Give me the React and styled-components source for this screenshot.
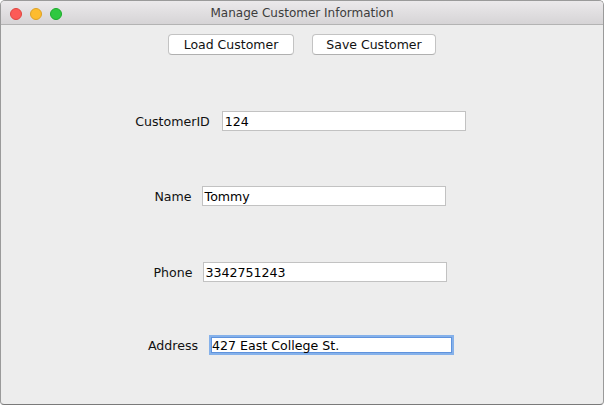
import React from "react";
import styled, { createGlobalStyle } from "styled-components";

const Global = createGlobalStyle`
  html, body { margin: 0; padding: 0; background: #ffffff; }
  * { box-sizing: border-box; }
`;

const Window = styled.div`
  width: 604px;
  height: 405px;
  background: #ededed;
  border: 1px solid #9a9a9a;
  border-bottom-color: #7a7a7a;
  border-radius: 5px 5px 4px 4px;
  overflow: hidden;
  display: flex;
  flex-direction: column;
  font-family: "DejaVu Sans", "Liberation Sans", sans-serif;
`;

const TitleBar = styled.div`
  position: relative;
  height: 24px;
  flex: none;
  background: linear-gradient(#ebe9eb, #d6d4d6);
  border-bottom: 1px solid #b3b3b3;
  display: flex;
  align-items: center;
  justify-content: center;
`;

const Lights = styled.div`
  position: absolute;
  left: 9px;
  top: 7px;
  display: flex;
  gap: 8px;
`;

const Light = styled.span`
  width: 12px;
  height: 12px;
  border-radius: 50%;
  background: ${(p) => p.$fill};
  border: 0.5px solid ${(p) => p.$edge};
`;

const Title = styled.div`
  font-size: 12px;
  color: #3c3c3c;
  margin-top: 1px;
`;

const Content = styled.div`
  flex: 1;
  display: flex;
  flex-direction: column;
  align-items: center;
`;

const ButtonRow = styled.div`
  display: flex;
  gap: 18px;
  margin-top: 9px;
`;

const Button = styled.button`
  width: ${(p) => p.$w}px;
  height: 21px;
  background: #ffffff;
  border: 1px solid #c3c3c3;
  border-bottom-color: #b0b0b0;
  border-radius: 4px;
  font-family: "DejaVu Sans", "Liberation Sans", sans-serif;
  font-size: 12.5px;
  color: #111;
  padding: 0;
  display: flex;
  align-items: center;
  justify-content: center;
`;

const FieldRow = styled.div`
  display: flex;
  align-items: center;
  gap: ${(p) => p.$gap}px;
  margin-top: ${(p) => p.$top}px;
  margin-left: ${(p) => p.$shift || 0}px;
`;

const Label = styled.span`
  font-size: 12.6px;
  color: #111;
`;

const Field = styled.div`
  width: 244px;
  height: 20px;
  background: #ffffff;
  border: 1px solid #c2c2c2;
  font-size: 12.6px;
  color: #000;
  padding-left: 2px;
  display: flex;
  align-items: center;
  ${(p) =>
    p.$focused &&
    `
    border: 2px solid #85b1ea;
    box-shadow: inset 0 0 0 1px #5f93dd;
    padding-left: 1px;
    width: 245px;
  `}
`;

export default function App() {
  return (
    <>
      <Global />
      <Window>
        <TitleBar>
          <Lights>
            <Light $fill="#fc5b57" $edge="#e0443e" />
            <Light $fill="#fdbc2e" $edge="#dea123" />
            <Light $fill="#2fc840" $edge="#1aab29" />
          </Lights>
          <Title>Manage Customer Information</Title>
        </TitleBar>
        <Content>
          <ButtonRow>
            <Button $w={126}>Load Customer</Button>
            <Button $w={124}>Save Customer</Button>
          </ButtonRow>
          <FieldRow $top={56} $gap={12} $shift={-3}>
            <Label>CustomerID</Label>
            <Field>124</Field>
          </FieldRow>
          <FieldRow $top={55} $gap={10} $shift={-4}>
            <Label>Name</Label>
            <Field>Tommy</Field>
          </FieldRow>
          <FieldRow $top={56} $gap={10} $shift={-4}>
            <Label>Phone</Label>
            <Field>3342751243</Field>
          </FieldRow>
          <FieldRow $top={53} $gap={11} $shift={-2}>
            <Label>Address</Label>
            <Field $focused>427 East College St.</Field>
          </FieldRow>
        </Content>
      </Window>
    </>
  );
}
